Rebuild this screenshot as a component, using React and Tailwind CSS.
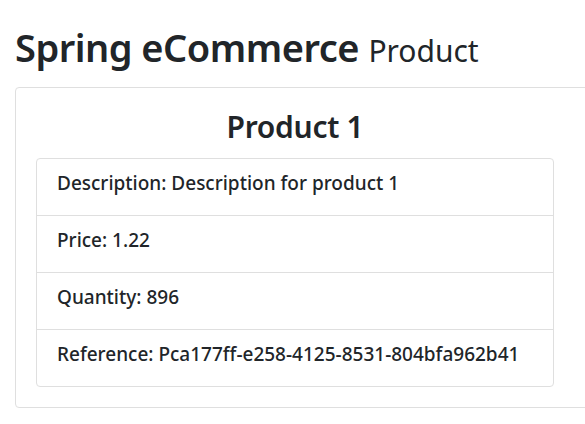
import React from 'react';

const product = {
    name: 'Product 1',
    description: 'Description for product 1',
    price: 1.22,
    quantity: 896,
    reference: 'Pca177ff-e258-4125-8531-804bfa962b41',
};

const App = () => {
    const rows = [
        ['Description', product.description],
        ['Price', product.price],
        ['Quantity', product.quantity],
        ['Reference', product.reference],
    ];

    return (
        <div
            className="h-[424px] w-[585px] overflow-hidden bg-white px-[15px] pt-[23px] text-[#212529]"
            style={{ fontFamily: '"Noto Sans", "Open Sans", sans-serif' }}
        >
            <h1 className="mb-4 h-[48px] whitespace-nowrap text-[38px] font-semibold leading-[48px] tracking-[-0.5px]">
                Spring eCommerce{' '}
                <small className="text-[30px] font-normal leading-none tracking-normal">Product</small>
            </h1>

            {/* CARD */}
            <div className="w-[620px] rounded border border-[#dfdfdf] p-5">
                <div className="w-[518px]">
                    <h2 className="mb-3 text-center text-[30px] font-semibold leading-[38.4px] tracking-[-0.3px]">
                        {product.name}
                    </h2>
                    <ul className="divide-y divide-[#dfdfdf] rounded border border-[#dfdfdf]">
                        {rows.map(([label, value]) => (
                            <li key={label} className="px-5 py-3">
                                <h5 className="mb-2 whitespace-nowrap text-[19px] font-medium leading-6">
                                    {label}: {value}
                                </h5>
                            </li>
                        ))}
                    </ul>
                </div>
            </div>
        </div>
    );
};

export default App;
